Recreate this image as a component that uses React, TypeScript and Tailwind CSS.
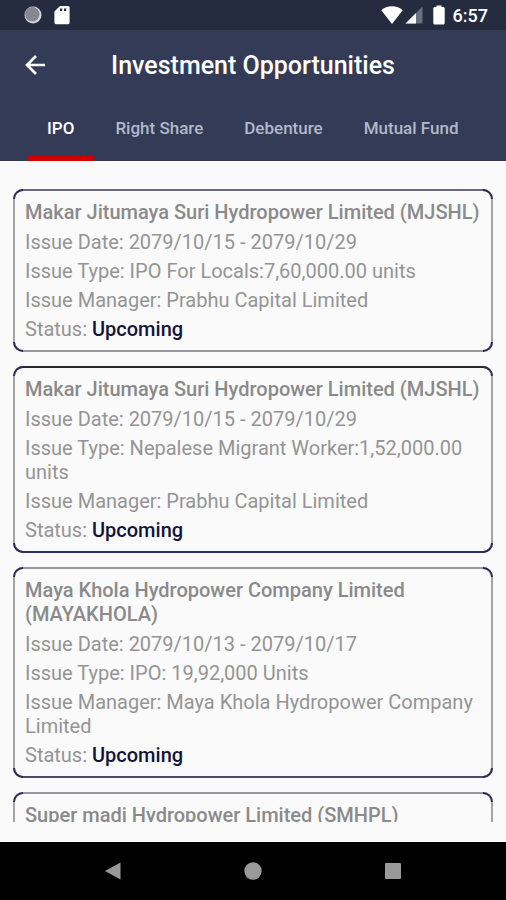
import React from "react";

interface Issue {
  name: string;
  rows: string[];
  status?: string;
  edges: string;
}

const tabs = ["IPO", "Right Share", "Debenture", "Mutual Fund"];

const issues: Issue[] = [
  {
    name: "Makar Jitumaya Suri Hydropower Limited (MJSHL)",
    rows: [
      "Issue Date: 2079/10/15 - 2079/10/29",
      "Issue Type: IPO For Locals:7,60,000.00 units",
      "Issue Manager: Prabhu Capital Limited",
    ],
    status: "Upcoming",
    edges: "border-t-[#6a6680] border-b-[#98979c]",
  },
  {
    name: "Makar Jitumaya Suri Hydropower Limited (MJSHL)",
    rows: [
      "Issue Date: 2079/10/15 - 2079/10/29",
      "Issue Type: Nepalese Migrant Worker:1,52,000.00 units",
      "Issue Manager: Prabhu Capital Limited",
    ],
    status: "Upcoming",
    edges: "border-t-[#2b282c] border-b-[#2f2f62]",
  },
  {
    name: "Maya Khola Hydropower Company Limited (MAYAKHOLA)",
    rows: [
      "Issue Date: 2079/10/13 - 2079/10/17",
      "Issue Type: IPO: 19,92,000 Units",
      "Issue Manager: Maya Khola Hydropower Company Limited",
    ],
    status: "Upcoming",
    edges: "border-t-[#98979c] border-b-[#4f4a68]",
  },
  {
    name: "Super madi Hydropower Limited (SMHPL)",
    rows: [],
    edges: "border-t-[#98979c] border-b-[#98979c]",
  },
];

// Darker arcs laid over the four corners of a card
const corners = [
  "-top-0.5 -left-0.5 rounded-tl-[10px] border-t-2 border-l-2",
  "-top-0.5 -right-0.5 rounded-tr-[10px] border-t-2 border-r-2",
  "-bottom-0.5 -left-0.5 rounded-bl-[10px] border-b-2 border-l-2",
  "-right-0.5 -bottom-0.5 rounded-br-[10px] border-r-2 border-b-2",
];

const StatusBar: React.FC = () => (
  <div className="flex h-[30px] shrink-0 items-center justify-between bg-[#252c3f] pr-[18px] pl-6 text-white">
    <div className="flex items-center gap-3">
      <svg width="18" height="18" viewBox="0 0 18 18">
        <circle cx="9" cy="9" r="8.5" fill="#d5d7dc" />
        <circle cx="8.3" cy="8.3" r="7.2" fill="#85888f" />
      </svg>
      <svg width="16" height="20" viewBox="0 0 16 20" fill="#fff">
        <path d="M6 1h8a1.6 1.6 0 0 1 1.6 1.6v15a1.6 1.6 0 0 1-1.6 1.6H2a1.6 1.6 0 0 1-1.6-1.6V6.500z" />
        <path d="M6 3.500h2.200v2.500H6zM10 3.500h2.200v2.500H10z" fill="#252c3f" />
      </svg>
    </div>
    <div className="flex items-center">
      <svg width="22" height="18" viewBox="0 0 22 18" fill="#fff">
        <path d="M11 18 .3 4.200C3 1.700 6.800.2 11 .2s8 1.500 10.700 4z" />
      </svg>
      <svg className="ml-0.5" width="18" height="18" viewBox="0 0 18 18">
        <path d="M17.500.5v17H.5z" fill="#69707f" />
        <path d="M11 7v10.500H.5z" fill="#fff" />
      </svg>
      <svg className="ml-2.5" width="12" height="20" viewBox="0 0 12 20" fill="#fff">
        <path d="M3.500.5h5v1.500h1.700c.8 0 1.500.7 1.500 1.500v14.500c0 .8-.7 1.500-1.500 1.500H1.800C1 19.500.3 18.800.3 18V3.500C.3 2.700 1 2 1.800 2h1.700z" />
      </svg>
      <span className="ml-2 pt-0.5 text-lg font-medium">6:57</span>
    </div>
  </div>
);

const Header: React.FC = () => (
  <header className="shrink-0 bg-[#333b57] text-white">
    <div className="relative flex h-[70px] items-center justify-center">
      <button type="button" aria-label="Back" className="absolute left-6">
        <svg width="22" height="22" viewBox="0 0 22 22" fill="none" stroke="#fff" strokeWidth="2.700">
          <path d="M21 11H3M12 2l-9 9 9 9" />
        </svg>
      </button>
      <h1 className="pt-0.5 text-[25px] font-medium">Investment Opportunities</h1>
    </div>
    <nav className="flex gap-px px-[27px]">
      {tabs.map((tab, index) => (
        <button
          key={tab}
          type="button"
          className={
            index === 0
              ? "h-[61px] border-b-[5px] border-[#d00000] px-5 pt-0.5 text-[17px] font-medium whitespace-nowrap text-white"
              : "h-[61px] border-b-[5px] border-transparent px-5 pt-0.5 text-[17px] font-medium whitespace-nowrap text-[#b3b8c9]"
          }
        >
          {tab}
        </button>
      ))}
    </nav>
  </header>
);

const IssueCard: React.FC<{ issue: Issue }> = ({ issue }) => (
  <article
    className={`relative rounded-[10px] border-2 border-x-[#a3a3a8] px-2.5 py-[9px] text-xl leading-6 text-[#949494] ${issue.edges}`}
  >
    {corners.map((corner) => (
      <span key={corner} className={`absolute size-2.5 border-[#2c2955] ${corner}`} />
    ))}
    <h2 className="font-medium text-[#8a8a8a]">{issue.name}</h2>
    {issue.status && (
      <div className="mt-1.5 flex flex-col gap-[5px]">
        {issue.rows.map((row) => (
          <p key={row}>{row}</p>
        ))}
        <p>
          Status: <span className="font-medium text-[#14143a]">{issue.status}</span>
        </p>
      </div>
    )}
  </article>
);

const SystemNav: React.FC = () => (
  <nav className="flex h-[58px] shrink-0 items-center justify-center gap-[122px] bg-black">
    <button type="button" aria-label="Back">
      <svg width="18" height="18" viewBox="0 0 18 18" fill="#999">
        <path d="M16.500.5v17L1 9z" />
      </svg>
    </button>
    <button type="button" aria-label="Home">
      <svg width="18" height="18" viewBox="0 0 18 18" fill="#999">
        <circle cx="9" cy="9" r="8.700" />
      </svg>
    </button>
    <button type="button" aria-label="Recent apps">
      <svg width="18" height="18" viewBox="0 0 18 18" fill="#999">
        <rect x="1" y="1" width="16" height="16" rx="1" />
      </svg>
    </button>
  </nav>
);

export default function App() {
  return (
    <div className="flex h-screen flex-col bg-[#fafafa] font-[Roboto,sans-serif]">
      <StatusBar />
      <Header />
      <main className="mb-5 flex min-h-0 flex-1 flex-col gap-3.5 overflow-y-auto px-[13px] pt-7 [scrollbar-width:none] *:shrink-0">
        {issues.map((issue, index) => (
          <IssueCard key={index} issue={issue} />
        ))}
      </main>
      <SystemNav />
    </div>
  );
}
